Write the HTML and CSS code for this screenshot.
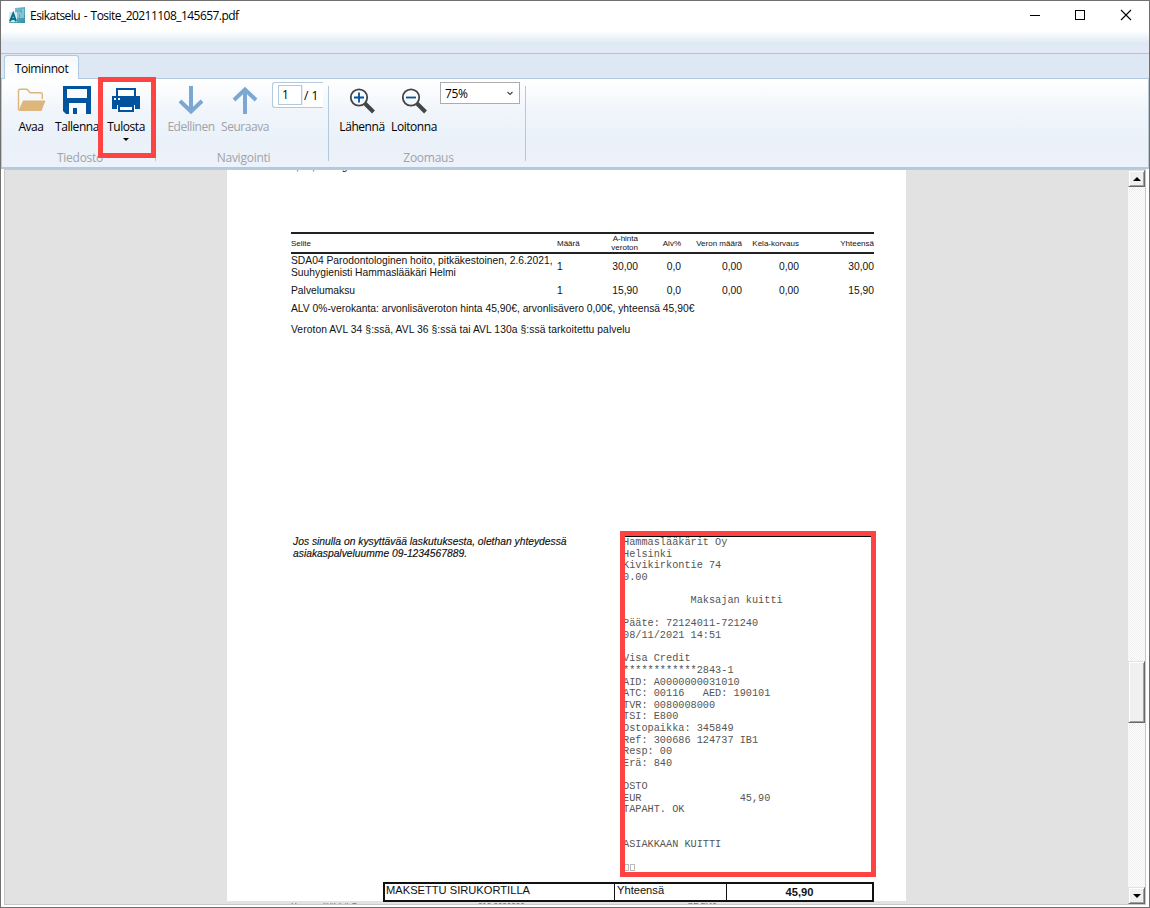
FILE: index.html
```html
<!DOCTYPE html>
<html lang="fi">
<head>
    <meta charset="UTF-8">
    <meta name="viewport" content="width=device-width, initial-scale=1.0">
    <title>Esikatselu - Tosite_20211108_145657.pdf</title>
    <link rel="stylesheet" href="styles.css">
</head>
<body>
<div class="window">
    <!-- Title bar -->
    <header class="titlebar">
        <svg class="app-icon" width="16" height="16" viewBox="0 0 16 16">
            <defs>
                <linearGradient id="appbg" x1="0" y1="0" x2="1" y2="1">
                    <stop offset="0" stop-color="#8fd0dc"/>
                    <stop offset="1" stop-color="#2f8fa8"/>
                </linearGradient>
            </defs>
            <path d="M6 1L16 0V16H0V13L6 5Z" fill="url(#appbg)"/>
            <path d="M0 5H8V15H0Z" fill="#d4eaf0"/>
            <path d="M1 14.3L4.200 6.500L7 14.3M2 12H6" fill="none" stroke="#0b6f8d" stroke-width="2"/>
            <path d="M9 11V6.500Q10.500 4.500 12 6.500V11M14 2V11" fill="none" stroke="#b9e2ea" stroke-width="1"/>
        </svg>
        <span class="title">Esikatselu - Tosite_20211108_145657.pdf</span>
        <svg class="window-buttons" width="104" height="12" viewBox="0 0 104 12" fill="none" stroke="#000" shape-rendering="crispEdges">
            <path d="M0 6.500H10"/>
            <rect x="45.500" y="1.500" width="9" height="9"/>
            <path d="M91 1L101 11M101 1L91 11" shape-rendering="auto" stroke-width="1.1"/>
        </svg>
    </header>
    <div class="quickbar"></div>

    <!-- Ribbon -->
    <div class="tabs">
        <div class="tab"><span>Toiminnot</span></div>
    </div>
    <div class="ribbon">
        <div class="group group-file">
            <div class="tools">
                <div class="tool open">
                    <svg width="30" height="30" viewBox="0 0 30 30">
                        <path d="M2.500 25V5.500Q2.500 4.200 4 4.200H11L14 7.700H24.500Q26.300 7.700 26.300 9.500V14" fill="none" stroke="#dcb67a" stroke-width="1.400"/>
                        <path d="M7 15.500H29.500L25.500 26H2.500Z" fill="#dcb67a"/>
                    </svg>
                    <span>Avaa</span>
                </div>
                <div class="tool save">
                    <svg width="30" height="30" viewBox="0 0 30 30">
                        <path d="M1 1H29V29H4L1 26Z" fill="#00539c"/>
                        <path d="M5 4H25V13H5Z" fill="#f8fafd"/>
                        <path d="M7 18H24V29H7Z" fill="#f8fafd"/>
                        <path d="M11 23H15V29H11Z" fill="#00539c"/>
                    </svg>
                    <span>Tallenna</span>
                </div>
                <div class="tool print">
                    <svg width="30" height="30" viewBox="0 0 30 30">
                        <path d="M1 11.500H29V24H1Z" fill="#00539c"/>
                        <path d="M6 12V4H24V12" fill="#fff" stroke="#00539c" stroke-width="2"/>
                        <path d="M1 11H29V18H1Z" fill="#00539c"/>
                        <path d="M6 20H24V25H6Z" fill="#fafcfe"/>
                        <path d="M8 21H22V26H8Z" fill="#fff" stroke="#00539c" stroke-width="2"/>
                        <path d="M3 13H5V15H3ZM7 13H9V15H7Z" fill="#fff"/>
                    </svg>
                    <span>Tulosta</span>
                    <i class="drop"></i>
                    <div class="marker print-marker"></div>
                </div>
            </div>
            <div class="caption">Tiedosto</div>
        </div>
        <div class="group group-nav">
            <div class="tools">
                <div class="tool prev disabled">
                    <svg width="30" height="30" viewBox="0 0 30 30">
                        <path d="M15 1V26M4 16L15 26.500L26 16" fill="none" stroke="#7ba7d0" stroke-width="4"/>
                    </svg>
                    <span>Edellinen</span>
                </div>
                <div class="tool next disabled">
                    <svg width="30" height="30" viewBox="0 0 30 30">
                        <path d="M15 29V5M4 15L15 4.500L26 15" fill="none" stroke="#7ba7d0" stroke-width="4"/>
                    </svg>
                    <span>Seuraava</span>
                </div>
                <div class="pager"><span class="page-number">1</span><span>/ 1</span></div>
            </div>
            <div class="caption">Navigointi</div>
        </div>
        <div class="group group-zoom">
            <div class="tools">
                <div class="tool zoom-in">
                    <svg width="30" height="30" viewBox="0 0 30 30" fill="none">
                        <circle cx="12" cy="12.500" r="8.200" stroke="#444" stroke-width="1.800"/>
                        <path d="M18 18.500L26.500 27" stroke="#444" stroke-width="4"/>
                        <path d="M7 12.500H17M12 7.500V17.500" stroke="#00539c" stroke-width="1.800"/>
                    </svg>
                    <span>Lähennä</span>
                </div>
                <div class="tool zoom-out">
                    <svg width="30" height="30" viewBox="0 0 30 30" fill="none">
                        <circle cx="12" cy="12.500" r="8.200" stroke="#444" stroke-width="1.800"/>
                        <path d="M18 18.500L26.500 27" stroke="#444" stroke-width="4"/>
                        <path d="M7 12.500H17" stroke="#00539c" stroke-width="1.800"/>
                    </svg>
                    <span>Loitonna</span>
                </div>
                <div class="zoom-select">
                    <span>75%</span>
                    <svg width="6" height="5" viewBox="0 0 6 5"><path d="M0.500 1L3 3.500L5.500 1" fill="none" stroke="#444" stroke-width="1.200"/></svg>
                </div>
            </div>
            <div class="caption">Zoomaus</div>
        </div>
    </div>

    <!-- Document -->
    <div class="viewer">
        <div class="canvas">
            <div class="paper">
                <div class="previous-line"><span>,</span><span>,</span><span>g</span></div>
                <table class="items">
                    <thead>
                        <tr>
                            <th class="desc">Selite</th>
                            <th class="qty">Määrä</th>
                            <th class="price">A-hinta<br>veroton</th>
                            <th class="vat">Alv%</th>
                            <th class="tax">Veron määrä</th>
                            <th class="kela">Kela-korvaus</th>
                            <th class="sum">Yhteensä</th>
                        </tr>
                    </thead>
                    <tbody>
                        <tr class="first">
                            <td class="desc">SDA04 Parodontologinen hoito, pitkäkestoinen, 2.6.2021,<br>Suuhygienisti Hammaslääkäri Helmi</td>
                            <td class="qty">1</td>
                            <td>30,00</td>
                            <td>0,0</td>
                            <td>0,00</td>
                            <td>0,00</td>
                            <td>30,00</td>
                        </tr>
                        <tr class="second">
                            <td class="desc">Palvelumaksu</td>
                            <td class="qty">1</td>
                            <td>15,90</td>
                            <td>0,0</td>
                            <td>0,00</td>
                            <td>0,00</td>
                            <td>15,90</td>
                        </tr>
                    </tbody>
                </table>
                <p class="note">ALV 0%-verokanta: arvonlisäveroton hinta 45,90€, arvonlisävero 0,00€, yhteensä 45,90€</p>
                <p class="note law">Veroton AVL 34 §:ssä, AVL 36 §:ssä tai AVL 130a §:ssä tarkoitettu palvelu</p>

                <div class="lower">
                    <p class="contact">Jos sinulla on kysyttävää laskutuksesta, olethan yhteydessä<br>asiakaspalveluumme 09-1234567889.</p>
                    <div class="receipt">
<pre>Hammaslääkärit Oy
Helsinki
Kivikirkontie 74
0.00

           Maksajan kuitti

Pääte: 72124011-721240
08/11/2021 14:51

Visa Credit
************2843-1
AID: A0000000031010
ATC: 00116   AED: 190101
TVR: 0080008000
TSI: E800
Ostopaikka: 345849
Ref: 300686 124737 IB1
Resp: 00
Erä: 840

OSTO
EUR                45,90
TAPAHT. OK


ASIAKKAAN KUITTI
</pre>
                        <div class="boxes"><i></i><i></i></div>
                        <div class="marker receipt-marker"></div>
                    </div>
                </div>

                <div class="paid">
                    <div class="method">MAKSETTU SIRUKORTILLA</div>
                    <div class="total-label">Yhteensä</div>
                    <div class="total">45,90</div>
                </div>
                <div class="footer-line"><span>Hammaslääkärit Oy</span><span>010 0000000</span><span>OP FI40</span></div>
            </div>
        </div>
        <div class="scrollbar">
            <div class="scroll-button"><i class="up"></i></div>
            <div class="thumb"></div>
            <div class="scroll-button"><i class="down"></i></div>
        </div>
    </div>
</div>
</body>
</html>
```
FILE: styles.css
```css
/* General Styles */
* {
    box-sizing: border-box;
}

body {
    margin: 0;
    font-family: "Open Sans", "Noto Sans", sans-serif;
    font-size: 12px;
    color: #000;
}

.window {
    width: 1150px;
    height: 908px;
    border: 1px solid #707070;
    background: #fff;
    display: flex;
    flex-direction: column;
    overflow: hidden;
}

/* Title Bar */
.titlebar {
    height: 30px;
    flex: none;
    display: flex;
    align-items: center;
    padding: 0 16px 0 8px;
}

.title {
    margin-left: 5px;
    margin-top: -2px;
    letter-spacing: -0.540px;
    word-spacing: 1px;
    white-space: nowrap;
}

.app-icon {
    margin-top: -2px;
}

.window-buttons {
    margin-left: auto;
    margin-right: -1px;
    margin-top: -2px;
}

.quickbar {
    height: 23px;
    flex: none;
    background: linear-gradient(#fff, #dfe9f4 55%, #e3eaf5);
    border-bottom: 1px solid #b4c4d7;
}

/* Ribbon */
.tabs {
    height: 24px;
    flex: none;
    background: #dee8f4;
    padding: 1px 0 0 3px;
}

.tab {
    width: 75px;
    height: 24px;
    background: linear-gradient(#f4f8fc, #fff);
    border: 1px solid #b3c9de;
    border-bottom: none;
    border-radius: 3px 3px 0 0;
    text-align: center;
    line-height: 26px;
    letter-spacing: -0.4px;
    white-space: nowrap;
    position: relative;
    z-index: 1;
}

.ribbon {
    height: 91px;
    flex: none;
    display: flex;
    border: 1px solid #b3c9de;
    border-bottom-width: 2px;
    background: linear-gradient(#fff, #f0f5fb 38%, #eaf1f9 70%, #edf2fa);
}

.group {
    display: flex;
    flex-direction: column;
    justify-content: space-between;
    position: relative;
    border-right: 1px solid #b3c9de;
    height: 75px;
    margin-top: 7px;
}

.group-file {
    width: 154px;
}

.group-nav {
    width: 173px;
}

.group-zoom {
    width: 197px;
}

.tools {
    display: flex;
    align-items: flex-start;
    height: 64px;
    margin-top: -1px;
}

.tool {
    position: relative;
    display: flex;
    flex-direction: column;
    align-items: center;
    white-space: nowrap;
    letter-spacing: -0.45px;
    line-height: 16px;
}

.tool span {
    margin-top: 4px;
}

.open {
    width: 30px;
    margin-left: 14px;
}

.save {
    width: 50px;
    margin-left: 6px;
}

.print {
    width: 50px;
    margin-left: -1px;
}

.prev {
    width: 54px;
    margin-left: 8px;
}

.next {
    width: 54px;
}

.zoom-in {
    width: 50px;
    margin-left: 8px;
}

.zoom-out {
    width: 54px;
}

.disabled,
.caption {
    color: #a0a3a8;
}

.drop {
    border: 3px solid transparent;
    border-top-color: #000;
    border-bottom: none;
    margin-top: 3px;
}

.caption {
    height: 16px;
    line-height: 16px;
    text-align: center;
    letter-spacing: -0.25px;
    margin-bottom: -5px;
    padding-left: 3px;
}

.pager {
    display: flex;
    align-items: center;
    width: 51px;
    height: 26px;
    margin: -3px 0 0 0;
    padding-left: 5px;
    border: 1px solid #b3c9de;
    border-right: none;
    border-radius: 3px 0 0 3px;
    background: #fff;
}

.page-number {
    width: 24px;
    height: 20px;
    line-height: 18px;
    border: 1px solid #b3c9de;
    box-shadow: 1px 0 #e6eef7;
    padding-left: 3px;
    margin-right: 2px;
}

.zoom-select {
    display: flex;
    align-items: center;
    justify-content: space-between;
    width: 80px;
    height: 22px;
    margin: -3px 0 0 -1px;
    padding: 0 6px 0 4px;
    border: 1px solid #acacac;
    background: #fff;
    letter-spacing: -0.4px;
}

/* Red frames over the ribbon button and the receipt */
.marker {
    position: absolute;
    border: 5px solid #ff4343;
    z-index: 2;
}

.print-marker {
    width: 58px;
    height: 81px;
    left: -3px;
    top: -8px;
}

/* Viewer */
.viewer {
    flex: none;
    display: flex;
    width: 1142px;
    height: 736px;
    margin-left: 3px;
    border: 1px solid #c8c8c8;
}

.canvas {
    width: 1123px;
    height: 734px;
    background: #e2e2e2;
    padding-left: 222px;
    overflow: hidden;
}

.paper {
    width: 679px;
    height: 740px;
    background: #fff;
    padding: 0 32px 0 64px;
    font-family: "Liberation Sans", Arial, sans-serif;
    font-size: 10.3px;
    line-height: 12px;
    color: #111;
}

.previous-line {
    height: 62px;
    display: flex;
    gap: 13px;
    padding-left: 5px;
    line-height: 11px;
    margin-top: -9px;
    margin-bottom: 9px;
}

.previous-line span:last-child {
    margin-left: 14px;
}

.items {
    width: 583px;
    border-collapse: separate;
    border-spacing: 0;
    table-layout: fixed;
}

.items th {
    height: 22px;
    padding: 0;
    border-top: 2px solid #222;
    border-bottom: 2px solid #222;
    font-size: 8px;
    font-weight: normal;
    line-height: 9px;
    text-align: right;
    white-space: nowrap;
}

.items td {
    padding: 0;
    text-align: right;
    white-space: nowrap;
}

.items .desc,
.items .qty {
    text-align: left;
}

.desc { width: 266px; }
.qty { width: 30px; }
.price { width: 51px; }
.vat { width: 43px; }
.tax { width: 61px; }
.kela { width: 57px; }
.sum { width: 75px; }

.first td {
    height: 25px;
}

.second td {
    height: 24px;
}

.note {
    margin: 0;
    white-space: nowrap;
}

.law {
    margin-top: 9px;
    letter-spacing: 0.070px;
}

.lower {
    display: flex;
    justify-content: space-between;
    height: 346px;
    margin-top: 200px;
}

.contact {
    margin: 0 0 0 2px;
    font-style: italic;
    -webkit-text-stroke: 0.150px #111;
    white-space: nowrap;
}

.receipt {
    position: relative;
    width: 251px;
    height: 341px;
    border-top: 1px solid #000;
    color: #555;
}

.receipt pre {
    margin: 0;
    font-family: "Liberation Mono", "Courier New", monospace;
    font-size: 10.240px;
    line-height: 11.620px;
}

.boxes {
    display: flex;
    gap: 1px;
    padding: 13px 0 0 1px;
}

.boxes i {
    width: 5px;
    height: 7px;
    border: 1px solid #bbb;
}

.receipt-marker {
    width: 256px;
    height: 346px;
    left: -3px;
    top: -6px;
}

.paid {
    display: flex;
    width: 491px;
    height: 20px;
    margin-left: 92px;
    border: 2px solid #111;
    font-size: 11.150px;
    line-height: 13px;
}

.method {
    width: 229px;
    padding-left: 1px;
}

.total-label {
    width: 113px;
    padding-left: 2px;
    border-left: 1px solid #111;
    border-right: 1px solid #111;
}

.total {
    flex: 1;
    text-align: center;
    font-weight: bold;
    line-height: 17px;
}

.footer-line {
    display: flex;
    margin-top: -1px;
    font-size: 8px;
    line-height: 9px;
    color: #555;
}

.footer-line span {
    width: 209px;
}

.footer-line span:nth-child(2) {
    width: 234px;
}

/* Scrollbar */
.scrollbar {
    width: 17px;
    display: flex;
    flex-direction: column;
    background: repeating-conic-gradient(#fff 0 25%, #efefef 0 50%) 0 0 / 2px 2px;
}

.scroll-button,
.thumb {
    background: #f0f0f0;
    border: 1px solid #e3e3e3;
    border-right-color: #696969;
    border-bottom-color: #696969;
    box-shadow: inset 1px 1px #fff, inset -1px -1px #a0a0a0;
}

.scroll-button {
    height: 17px;
    display: flex;
    align-items: center;
    justify-content: center;
}

.thumb {
    height: 62px;
    margin: 474px 0 164px;
}

.up,
.down {
    border: 4px solid transparent;
}

.up {
    border-top: none;
    border-bottom-color: #000;
}

.down {
    border-bottom: none;
    border-top-color: #000;
}
```
